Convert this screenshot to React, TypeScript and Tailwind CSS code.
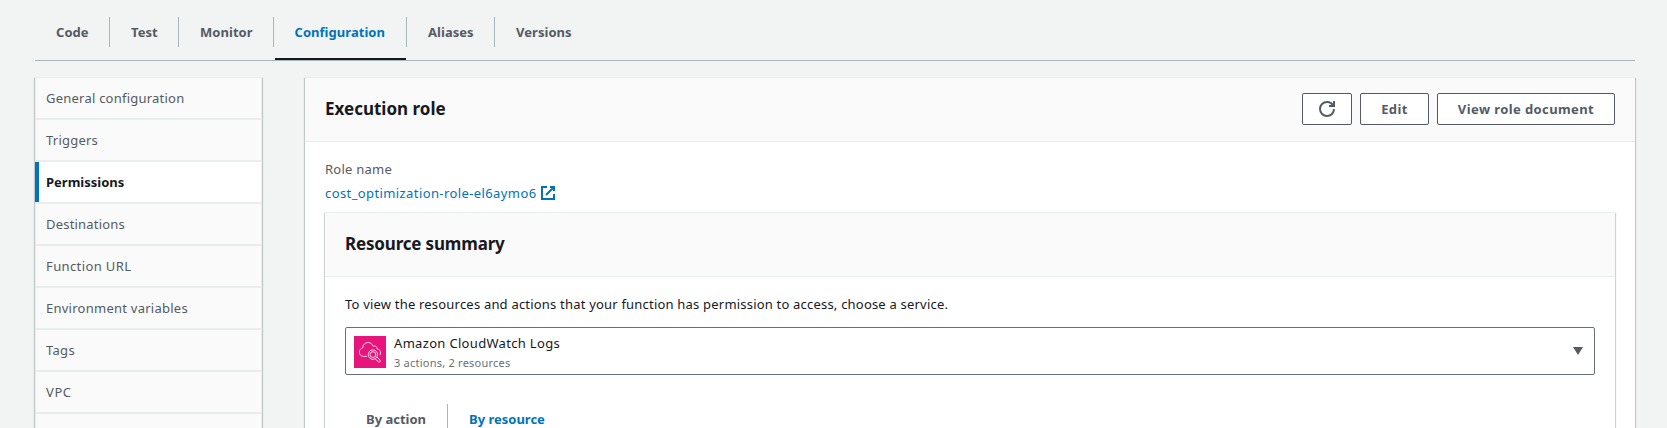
import clsx from 'clsx';

const tabs = [
  { label: 'Code', width: 'w-[75px]', pad: 'pl-[21px]' },
  { label: 'Test', width: 'w-[69px]', pad: 'pl-[21px]' },
  { label: 'Monitor', width: 'w-[95px]', pad: 'pl-[21px]' },
  { label: 'Configuration', width: 'w-[133px]', pad: 'pl-[20.5px]' },
  { label: 'Aliases', width: 'w-[88px]', pad: 'pl-[21px]' },
  { label: 'Versions', width: 'w-[98px]', pad: 'pl-[21px]' },
];

const navItems = [
  { label: 'General configuration' },
  { label: 'Triggers' },
  { label: 'Permissions' },
  { label: 'Destinations', spacing: 'tracking-[0.2px]' },
  { label: 'Function URL', spacing: 'tracking-[0.38px]' },
  { label: 'Environment variables', spacing: 'tracking-[0.25px]' },
  { label: 'Tags', spacing: 'tracking-[0.3px]' },
  { label: 'VPC', spacing: 'tracking-[0.6px]' },
];

const panelShadow =
  'border-t border-[#eaeded] shadow-[0_1px_1px_0_rgba(0,28,36,0.3),1px_1px_1px_0_rgba(0,28,36,0.15),-1px_1px_1px_0_rgba(0,28,36,0.15)]';

function FunctionTabs() {
  return (
    <nav className="flex h-[61px] w-[1600px] border-b border-[#aab7b8] pt-[17px]">
      {tabs.map((tab, i) => {
        const active = tab.label === 'Configuration';
        return (
          <div key={tab.label} className={clsx('relative h-[43px] shrink-0', tab.width)}>
            <div
              className={clsx(
                'h-[30px] text-[13px] leading-[31px] font-bold tracking-[0.04px]',
                tab.pad,
                i < tabs.length - 1 && 'border-r border-[#aab7b8]',
                active ? 'text-[#0073bb]' : 'text-[#545b64]',
              )}
            >
              {tab.label}
            </div>
            {active && <div className="absolute right-[1px] bottom-0 left-[1px] h-[2px] bg-[#16191f]" />}
          </div>
        );
      })}
    </nav>
  );
}

function SideNav() {
  return (
    <aside className={clsx('h-[600px] w-[227px] shrink-0 bg-[#fafafa]', panelShadow)}>
      {navItems.map((item) => {
        const active = item.label === 'Permissions';
        return (
          <div
            key={item.label}
            className={clsx(
              'h-[42px] border-x border-b-2 border-[#eaeded] text-[13px] leading-[40px]',
              active
                ? 'border-l-0 bg-white font-bold text-[#16191f]'
                : ['bg-[#fafafa] pl-[10px] text-[#545b64]', item.spacing ?? 'tracking-[0.23px]'],
            )}
          >
            {active ? (
              <div className="h-[40px] border-l-4 border-[#0073bb] pl-[7px]">{item.label}</div>
            ) : (
              item.label
            )}
          </div>
        );
      })}
      <div className="h-[100px] border-x border-[#eaeded]" />
    </aside>
  );
}

function RefreshIcon() {
  return (
    <svg width="16" height="16" viewBox="0 0 16 16" fill="none" stroke="#545b64" strokeWidth="2">
      <path d="M10 5h5V0" />
      <path d="M15 8a6.957 6.957 0 0 1-7 7 6.957 6.957 0 0 1-7-7 6.957 6.957 0 0 1 7-7 6.87 6.87 0 0 1 6.3 4" />
    </svg>
  );
}

function ExternalIcon() {
  return (
    <svg width="16" height="16" viewBox="0 0 16 16" fill="none" stroke="#0073bb" strokeWidth="2">
      <path d="M10 2h4v4" />
      <path d="M6 10l8-8" />
      <path d="M14 9.048V14H2V2h5" />
    </svg>
  );
}

function CloudWatchIcon() {
  return (
    <svg className="mt-[2px]" width="32" height="32" viewBox="0 0 32 32" fill="none" stroke="#ffd6e9" strokeWidth="1">
      <rect width="32" height="32" fill="#e7157b" stroke="none" />
      <path d="M13 20.4H9.5C7 20.2 5.4 18.6 5.4 16.2c0-2.300 1.300-3.700 3.300-4.200C8.600 8.900 10.900 6.500 14 6.500c2.500 0 4.300 1.400 5.200 4 1.900-1.200 3.900.100 4 2.500 2.200.4 3.300 1.500 3.300 4 0 .8-.2 1.400-.6 2" />
      <circle cx="18.900" cy="18.600" r="4.700" />
      <circle cx="18.900" cy="18.600" r="2.900" />
      <path d="M20.900 22.700l3.600 3.100c1.200.8 2.500-.600 1.600-1.700l-3.300-3.200" />
    </svg>
  );
}

const button =
  'flex h-[32px] items-center justify-center rounded-[2px] border border-[#545b64] bg-white text-[13px] font-bold tracking-[0.4px] text-[#545b64]';

function ResourceSummary() {
  return (
    <section className={clsx('mt-[8px] h-[400px] bg-white', panelShadow)}>
      <header className="flex h-[64px] items-center border-b border-[#eaeded] bg-[#fafafa] px-[20px] pb-[1px]">
        <h2 className="text-[17px] font-bold tracking-[-0.17px] text-[#16191f]">Resource summary</h2>
      </header>
      <div className="px-[20px] pt-[16px]">
        <p className="text-[13px] leading-[22px] tracking-[0.2px] text-[#16191f]">
          To view the resources and actions that your function has permission to access, choose a service.
        </p>
        <div className="mt-[12px] flex h-[48px] items-center rounded-[2px] border border-[#687078] pr-[11px] pl-[8px]">
          <CloudWatchIcon />
          <div className="ml-[8px] flex-1 pt-[2px]">
            <div className="text-[13px] leading-[20px] tracking-[0.32px] text-[#16191f]">Amazon CloudWatch Logs</div>
            <div className="text-[11px] leading-[19px] tracking-[0.23px] text-[#687078]">3 actions, 2 resources</div>
          </div>
          <svg width="10" height="8" viewBox="0 0 10 8" fill="#545b64">
            <path d="M0 0h10L5 8z" />
          </svg>
        </div>
        <div className="mt-[29px] flex h-[30px] pl-[21px] text-[13px] leading-[30px] font-bold">
          <div className="w-[82px] border-r border-[#aab7b8] text-[#545b64]">By action</div>
          <div className="pl-[21px] text-[#0073bb]">By resource</div>
        </div>
      </div>
    </section>
  );
}

export default function App() {
  return (
    <div className="h-[428px] overflow-hidden bg-[#f2f3f3] px-[35px] font-['Noto_Sans',sans-serif]">
      <FunctionTabs />
      <div className="mt-[16px] flex w-[1600px] items-start gap-[43px]">
        <SideNav />
        <main className={clsx('h-[600px] w-[1330px] bg-white', panelShadow)}>
          <header className="flex h-[64px] items-center justify-between border-b border-[#eaeded] bg-[#fafafa] px-[20px]">
            <h2 className="pb-[1px] text-[17px] font-bold text-[#16191f]">Execution role</h2>
            <div className="flex gap-[8px] pb-[1px]">
              <button className={clsx(button, 'w-[50px]')} aria-label="Refresh">
                <RefreshIcon />
              </button>
              <button className={clsx(button, 'w-[69px] pt-[2px]')}>Edit</button>
              <button className={clsx(button, 'w-[178px] pt-[2px]')}>View role document</button>
            </div>
          </header>
          <div className="px-[20px] pt-[16px]">
            <div className="text-[13px] leading-[22px] tracking-[0.25px] text-[#545b64]">Role name</div>
            <div className="mt-[2px] flex h-[22px] items-center text-[13px] tracking-[0.4px] text-[#0073bb]">
              <span className="w-[215px] pt-[2px] whitespace-nowrap">cost_optimization-role-el6aymo6</span>
              <ExternalIcon />
            </div>
            <ResourceSummary />
          </div>
        </main>
      </div>
    </div>
  );
}
